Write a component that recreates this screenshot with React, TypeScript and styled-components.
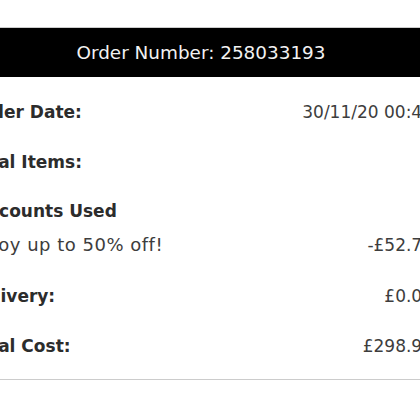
import React from 'react'
import styled, { createGlobalStyle } from 'styled-components'

const GlobalStyle = createGlobalStyle`
  html, body {
    margin: 0;
    padding: 0;
    background: #ffffff;
    overflow: hidden;
  }
  body {
    font-family: 'DejaVu Sans', 'Liberation Sans', sans-serif;
  }
`

const Page = styled.div`
  width: 420px;
  height: 420px;
  overflow: hidden;
  padding-top: 27px;
  box-sizing: border-box;
`

// the panel is wider than the window, like the cropped shot
const Panel = styled.section`
  width: 500px;
  margin-left: -49px;
  border-top: 1px solid #cccccc;
  border-bottom: 1px solid #cccccc;
`

const Header = styled.h2`
  margin: 0;
  height: 49px;
  background: #000000;
  color: #f2f2f2;
  display: flex;
  align-items: center;
  justify-content: center;
  font-size: 18.4px;
  font-weight: 400;
`

const Body = styled.div`
  padding: 10px 18px 8px;
`

const Row = styled.div`
  height: 50px;
  display: flex;
  align-items: center;
  justify-content: space-between;
`

const Label = styled.span`
  font-size: 17px;
  font-weight: 700;
  color: #2c2c2c;
`

const Value = styled.span<{ $wide?: boolean }>`
  font-size: ${(p) => (p.$wide ? '18px' : '17px')};
  letter-spacing: ${(p) => (p.$wide ? '0.5px' : '0')};
  font-weight: 400;
  color: #3d3d3d;
`

const Group = styled.div`
  height: 84px;
  padding-top: 12px;
  box-sizing: border-box;
  display: flex;
  flex-direction: column;
  gap: 10px;
  line-height: 24px;
`

const SubRow = styled.div`
  display: flex;
  align-items: center;
  justify-content: space-between;
`

const rows = [
  { label: 'Order Date:', value: '30/11/20 00:46' },
  { label: 'Total Items:', value: '1' },
]

const totals = [
  { label: 'Delivery:', value: '£0.00' },
  { label: 'Total Cost:', value: '£298.95' },
]

export default function App() {
  return (
    <Page>
      <GlobalStyle />
      <Panel>
        <Header>Order Number: 258033193</Header>
        <Body>
          {rows.map((r) => (
            <Row key={r.label}>
              <Label>{r.label}</Label>
              <Value>{r.value}</Value>
            </Row>
          ))}
          <Group>
            <Label>Discounts Used</Label>
            <SubRow>
              <Value $wide>Enjoy up to 50% off!</Value>
              <Value>-£52.75</Value>
            </SubRow>
          </Group>
          {totals.map((r) => (
            <Row key={r.label}>
              <Label>{r.label}</Label>
              <Value>{r.value}</Value>
            </Row>
          ))}
        </Body>
      </Panel>
    </Page>
  )
}
